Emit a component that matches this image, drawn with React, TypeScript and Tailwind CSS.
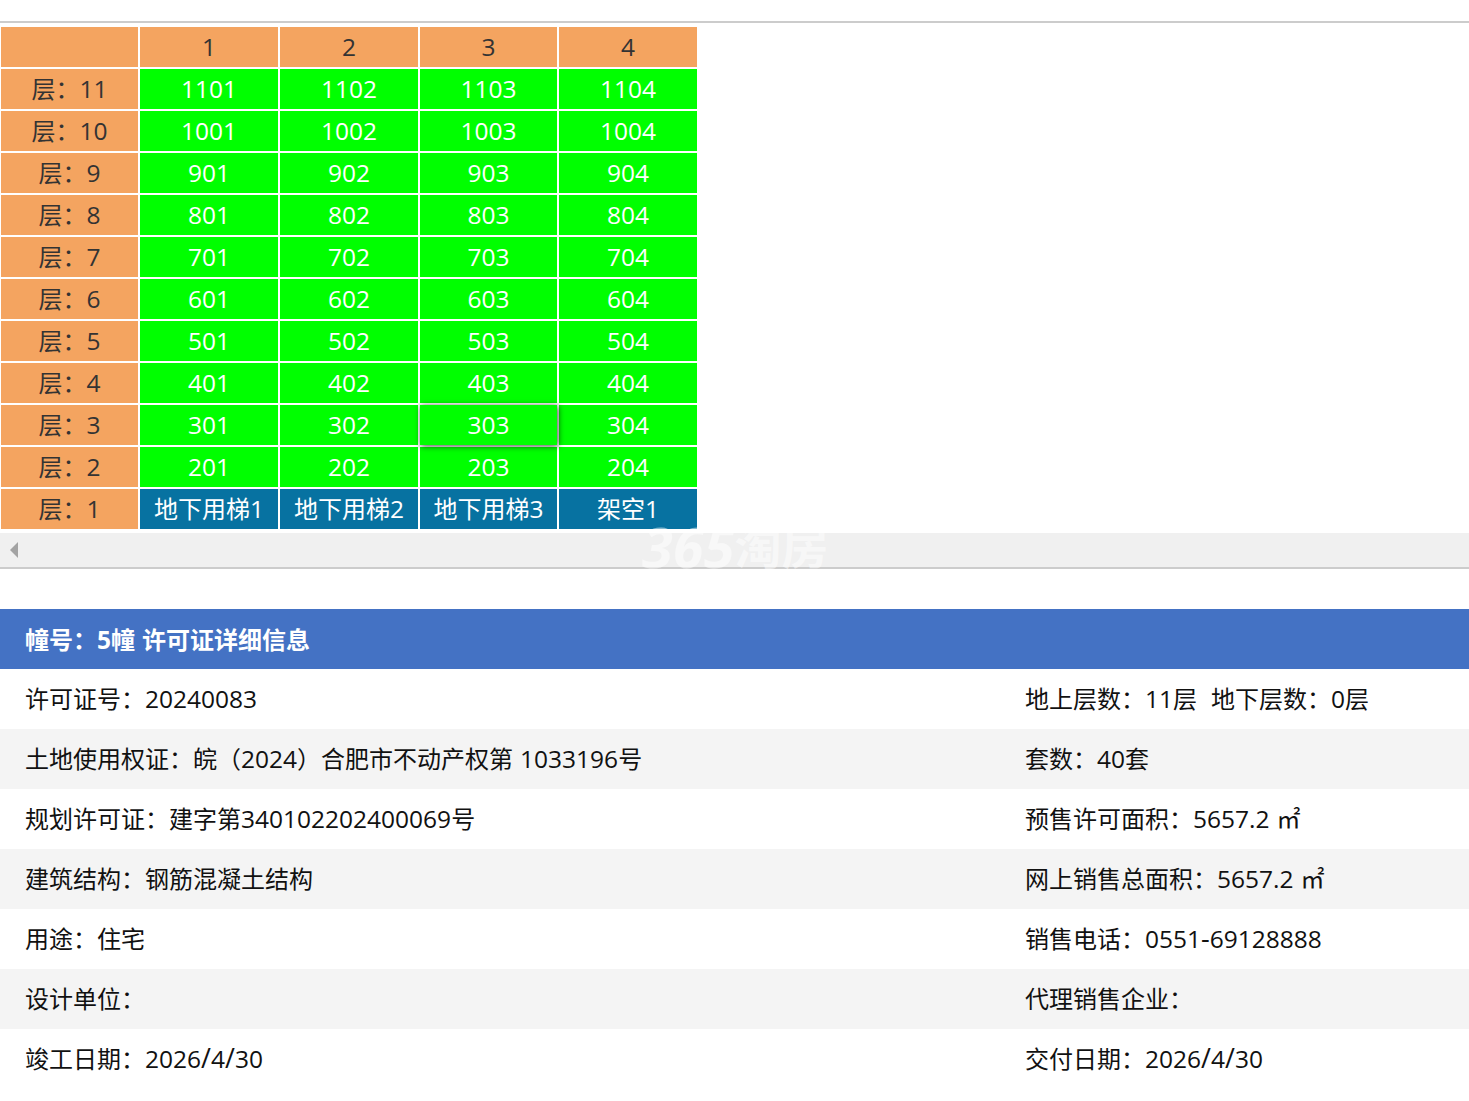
import React from "react";

const font = { fontFamily: '"Open Sans", "Noto Sans CJK SC", sans-serif' };

const floors = [
  { label: "层：11", rooms: ["1101", "1102", "1103", "1104"] },
  { label: "层：10", rooms: ["1001", "1002", "1003", "1004"] },
  { label: "层：9", rooms: ["901", "902", "903", "904"] },
  { label: "层：8", rooms: ["801", "802", "803", "804"] },
  { label: "层：7", rooms: ["701", "702", "703", "704"] },
  { label: "层：6", rooms: ["601", "602", "603", "604"] },
  { label: "层：5", rooms: ["501", "502", "503", "504"] },
  { label: "层：4", rooms: ["401", "402", "403", "404"] },
  { label: "层：3", rooms: ["301", "302", "303", "304"] },
  { label: "层：2", rooms: ["201", "202", "203", "204"] },
];

const details = [
  ["许可证号：20240083", "地上层数：11层  地下层数：0层"],
  ["土地使用权证：皖（2024）合肥市不动产权第 1033196号", "套数：40套"],
  ["规划许可证：建字第340102202400069号", "预售许可面积：5657.2 ㎡"],
  ["建筑结构：钢筋混凝土结构", "网上销售总面积：5657.2 ㎡"],
  ["用途：住宅", "销售电话：0551-69128888"],
  ["设计单位：", "代理销售企业："],
  ["竣工日期：2026/4/30", "交付日期：2026/4/30"],
];

// latin runs sit a touch larger than the CJK around them, separators a bit more
const Mixed: React.FC<{ text: string }> = ({ text }) => (
  <>
    {text.split(/([0-9.]+|[/\- ]+)/).map((part, i) =>
      i % 2 === 1 ? (
        <span
          key={i}
          className={
            /[/\- ]/.test(part)
              ? "text-[27px] leading-none"
              : "text-[24.5px] leading-none"
          }
        >
          {part}
        </span>
      ) : (
        part
      )
    )}
  </>
);

const Head: React.FC<{ text?: string }> = ({ text = "" }) => (
  <div className="flex h-10 items-center justify-center bg-[#f4a460] text-[#333]">
    <span className="whitespace-pre">
      <Mixed text={text} />
    </span>
  </div>
);

const Room: React.FC<{ name: string; blue?: boolean; hover?: boolean }> = ({
  name,
  blue,
  hover,
}) => (
  <div
    className={`flex h-10 items-center justify-center text-white ${
      blue ? "bg-[#0772a1]" : "bg-[#00ff00]"
    } ${hover ? "relative shadow-[1px_1px_6px_rgba(0,0,0,0.75)]" : ""}`}
  >
    <span>
      <Mixed text={name} />
    </span>
  </div>
);

export default function App() {
  return (
    <div style={font} className="min-h-[1101px] overflow-hidden bg-white text-2xl">
      <div className="mt-[21px] border-t-2 border-b-2 border-[#ccc]">
        <div className="relative">
          <div className="grid w-max grid-cols-[137px_138px_138px_137px_138px] gap-[2px] pt-[4px] pb-[4px] pl-px">
            <Head />
            <Head text="1" />
            <Head text="2" />
            <Head text="3" />
            <Head text="4" />
            {floors.map((floor) => (
              <React.Fragment key={floor.label}>
                <Head text={floor.label} />
                {floor.rooms.map((room) => (
                  <Room key={room} name={room} hover={room === "303"} />
                ))}
              </React.Fragment>
            ))}
            <Head text="层：1" />
            <Room name="地下用梯1" blue />
            <Room name="地下用梯2" blue />
            <Room name="地下用梯3" blue />
            <Room name="架空1" blue />
          </div>
          <div className="flex h-[34px] items-center bg-[#f0f0f0] pl-[10px]">
            <svg width="8" height="16" viewBox="0 0 8 16">
              <path d="M8 0V16L0 8Z" fill="#a3a3a3" />
            </svg>
          </div>
          <div className="absolute top-[503px] left-[642px] flex items-center leading-[40px] font-bold text-white/50">
            <span className="text-[56px] italic">365</span>
            <span className="text-[47px]">淘房</span>
          </div>
        </div>
      </div>

      <div className="mt-[40px]">
        <div className="flex h-[60px] items-center bg-[#4472c4] pl-[25px] font-bold whitespace-pre text-white">
          <span className="translate-y-px">
            <Mixed text="幢号：5幢 许可证详细信息" />
          </span>
        </div>
        {details.map(([left, right], i) => (
          <div
            key={left}
            className={`grid h-[60px] grid-cols-[1000px_1fr] items-center pl-[25px] whitespace-pre text-[#111] ${
              i % 2 === 1 ? "bg-[#f4f4f4]" : "bg-white"
            }`}
          >
            <span>
              <Mixed text={left} />
            </span>
            <span>
              <Mixed text={right} />
            </span>
          </div>
        ))}
      </div>
    </div>
  );
}
